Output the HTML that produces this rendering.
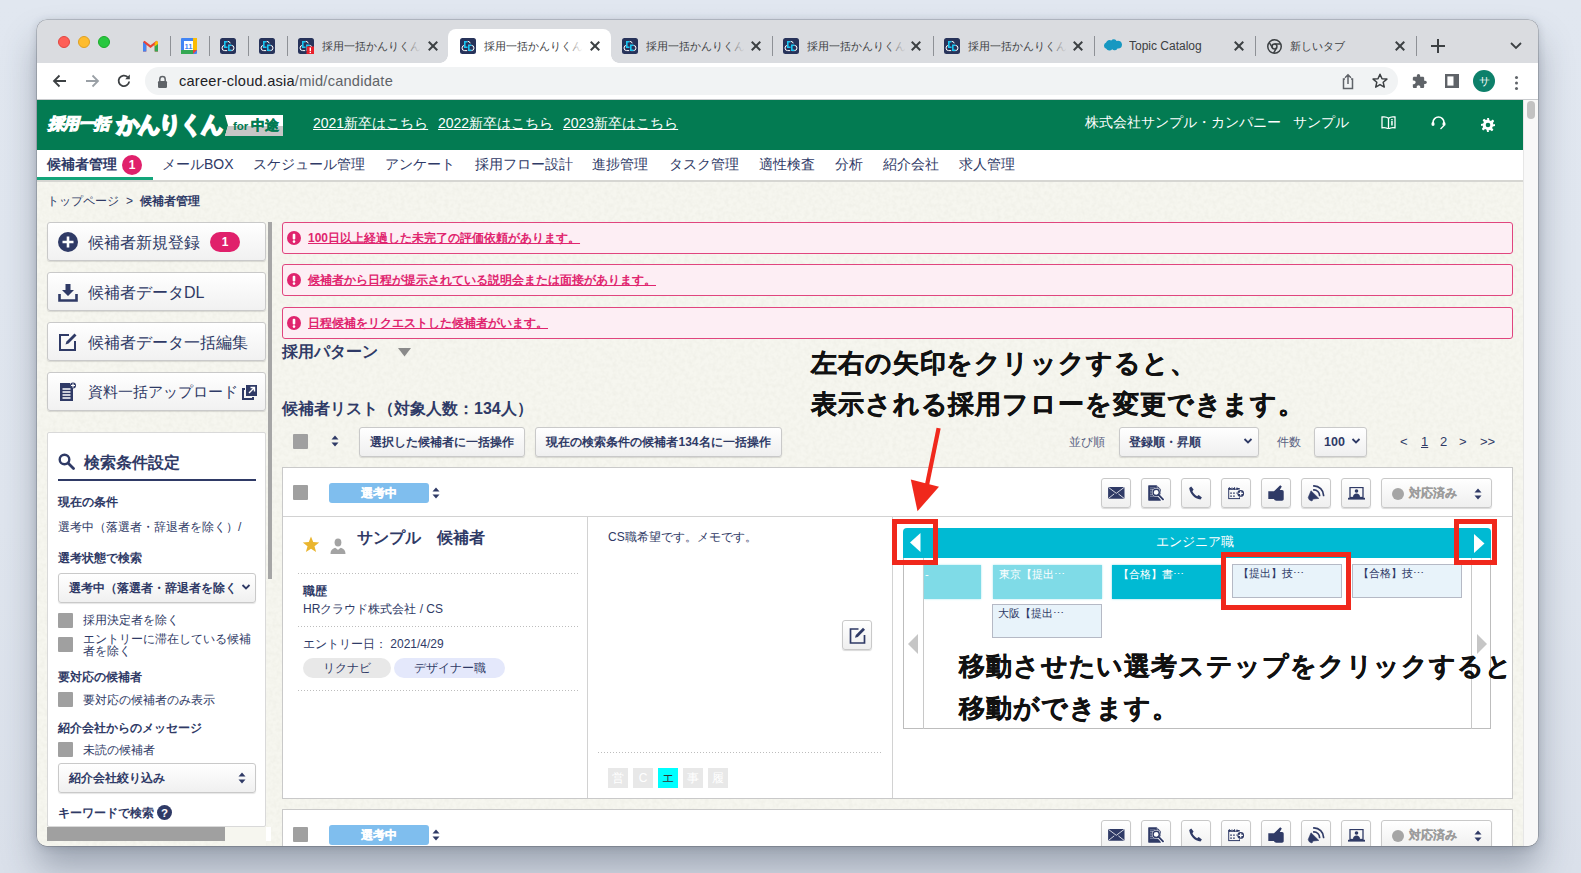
<!DOCTYPE html>
<html><head><meta charset="utf-8">
<style>
*{box-sizing:border-box;margin:0;padding:0}
html,body{width:1581px;height:873px;overflow:hidden}
body{font-family:"Liberation Sans",sans-serif;background:linear-gradient(180deg,#e1e7f0 0%,#dfe5ee 60%,#dae0ea 100%);position:relative;color:#2f3a66}
.a{position:absolute}
#win{position:absolute;left:37px;top:20px;width:1501px;height:826px;border-radius:10px;overflow:hidden;background:#dadce0;box-shadow:0 0 0 0.5px rgba(0,0,0,.3),0 1px 8px rgba(40,50,70,.2),0 22px 34px rgba(50,60,80,.36)}
.tabstrip{position:absolute;left:0;top:0;width:1501px;height:43px;background:#dadce0}
.toolbar{position:absolute;left:0;top:43px;width:1501px;height:37px;background:#fff;border-bottom:1px solid #c8cacd}
.dot{position:absolute;top:16px;width:12px;height:12px;border-radius:50%}
.sep{position:absolute;top:16px;width:1px;height:20px;background:#8e9196}
.fav{position:absolute;top:18px;width:16px;height:16px;border-radius:3px;background:#26345a}
.tt{position:absolute;top:17px;font-size:10.6px;color:#3c4043;white-space:nowrap;overflow:hidden;height:18px;line-height:18px}
.tx{position:absolute;top:19px;width:14px;height:14px}
.tx:before,.tx:after{content:"";position:absolute;left:6px;top:1px;width:2px;height:12px;background:#3c4043;transform:rotate(45deg)}
.tx:after{transform:rotate(-45deg)}
.acttab{position:absolute;left:411px;top:9px;width:163px;height:34px;background:#fff;border-radius:8px 8px 0 0}
.acttab:before,.acttab:after{content:"";position:absolute;bottom:0;width:8px;height:8px;background:radial-gradient(circle at 0 0,transparent 8px,#fff 8.5px)}
.acttab:before{left:-8px;background:radial-gradient(circle at 0 0,transparent 7.5px,#fff 8px)}
.acttab:after{right:-8px;background:radial-gradient(circle at 100% 0,transparent 7.5px,#fff 8px)}
.fade{position:absolute;top:17px;width:22px;height:18px;background:linear-gradient(90deg,rgba(218,220,224,0),#dadce0 85%)}
.fade.w{background:linear-gradient(90deg,rgba(255,255,255,0),#fff 85%)}
.urlbar{position:absolute;left:108px;top:4px;width:1253px;height:28px;border-radius:14px;background:#f1f3f4}
.url{left:142px;top:8px;font-size:14.6px;letter-spacing:0.23px;line-height:20px;color:#5f6368;white-space:nowrap}
.L{position:absolute;left:-37px;top:-20px;width:1581px;height:873px}
.logo1{left:48px;top:114px;font-size:16px;line-height:20px;font-weight:900;font-style:italic;color:#fff;letter-spacing:-0.6px;-webkit-text-stroke:1.2px #fff;white-space:nowrap}
.logo2{left:117px;top:112px;font-size:21.5px;line-height:26px;font-weight:900;color:#fff;-webkit-text-stroke:2.2px #fff;letter-spacing:-1.9px;white-space:nowrap}
.forbox{left:225px;top:115px;width:58px;height:21px;background:#fff;clip-path:polygon(0 0,100% 0,100% 100%,0 100%,3px 50%)}
.fb2{position:absolute;left:0;top:11px;width:58px;height:10px;background:#c6c6c6}
.fbt{position:absolute;left:8px;top:1px;font-size:11.5px;line-height:19px;color:#037b52;font-weight:bold;white-space:nowrap}
.fbt b{font-size:13.5px;margin-left:3px;-webkit-text-stroke:0.5px #037b52}
.hlink{top:114px;font-size:14px;line-height:18px;color:#fff;text-decoration:underline;white-space:nowrap}
.nav{top:155px;font-size:14px;line-height:18px;white-space:nowrap;color:#2f3a66}
.sbtn{left:47px;width:219px;height:39px;border:1px solid #c9c9c9;border-radius:3px;background:linear-gradient(#fff,#f1f1f1);box-shadow:0 1px 1px rgba(0,0,0,.12)}
.stx{left:88px;font-size:16px;line-height:22px;white-space:nowrap;color:#2f3a66}
.sb{left:58px;font-size:12px;line-height:16px;font-weight:bold;white-space:nowrap}
.sn{left:58px;font-size:12px;line-height:16px;white-space:nowrap}
.ssel{left:58px;width:198px;border:1px solid #c9c9c9;border-radius:3px;background:linear-gradient(#fff,#f0f0f0);box-shadow:0 1px 1px rgba(0,0,0,.1);font-size:12px;font-weight:bold;line-height:28px;white-space:nowrap;overflow:hidden}
.ssel span{margin-left:10px}
.cb{left:58px;width:15px;height:15px;background:#a0a0a0;border-radius:1px}
.alert{left:282px;width:1231px;height:32px;background:#fdeef4;border:1px solid #e0457e;border-radius:3px}
.ai{left:287px}
.at{left:308px;font-size:12px;line-height:16px;font-weight:bold;color:#e0246e;text-decoration:underline;white-space:nowrap}
.gbtn{border:1px solid #c9c9c9;border-radius:3px;background:linear-gradient(#fff,#efefef);box-shadow:0 1px 1px rgba(0,0,0,.12);font-size:12px;font-weight:bold;line-height:28px;text-align:center;white-space:nowrap;color:#2f3a66}
.pg{top:434px;font-size:13px;line-height:16px;color:#2f3a66}
.anno{font-size:26px;line-height:32px;font-weight:bold;color:#111;white-space:nowrap;letter-spacing:0.9px;-webkit-text-stroke:0.35px #111}
.card{left:282px;width:1231px;background:#fff;border:1px solid #c9c9c9}
.pill{left:329px;width:100px;height:20px;border-radius:3px;background:#7fbeee;color:#fff;font-size:12px;font-weight:bold;-webkit-text-stroke:0.3px #fff;line-height:20px;text-align:center}
.ibtn{width:30px;height:30px;border:1px solid #c9c9c9;border-radius:3px;background:linear-gradient(#fff,#efefef);box-shadow:0 1px 1px rgba(0,0,0,.15);display:flex;align-items:center;justify-content:center}
.gd{position:absolute;left:10px;top:9px;width:12px;height:12px;border-radius:50%;background:#a5a5a5}
.gdt{position:absolute;left:27px;top:6px;font-size:12px;line-height:16px;font-weight:bold;color:#9c9c9c;-webkit-text-stroke:0.2px #9c9c9c;white-space:nowrap}
.dot1{height:1px;background:repeating-linear-gradient(90deg,#bdbdbd 0 1px,transparent 1px 3px)}
.tag{top:658px;height:20px;border-radius:10px;font-size:12px;line-height:20px;text-align:center;white-space:nowrap}
.sq{top:768px;width:20px;height:20px;background:#e8e8e8;color:#fff;font-size:12px;line-height:20px;text-align:center}
.step{height:34px;font-size:11px;line-height:18px;padding-left:6px;white-space:nowrap;overflow:hidden}
.lc{background:#7fdbe7;color:#fff;box-shadow:0 0 2px #a6e6ee}
.dc{background:#00bad3;color:#fff;box-shadow:0 0 2px #7fd8e6}
.pl{background:#e8f3fa;border:1px solid #b5b9c5;color:#2f3a66;padding-left:5px;line-height:16px}
.rbox{border:5.5px solid #f0281c}
.page{position:absolute;left:0;top:80px;width:1501px;height:746px;background:#f5f4ee}
</style></head><body>
<svg width="0" height="0" style="position:absolute">
<defs>
<symbol id="cc" viewBox="0 0 16 16"><rect width="16" height="16" rx="2.5" fill="#27335a"/><path d="M4.6 7.4a2.6 2.6 0 0 0 0 5.2H7.2M11.4 7.4a2.6 2.6 0 0 1 0 5.2H9" stroke="#fff" stroke-width="1" fill="none"/><path d="M7.6 3.4a2.4 2.4 0 0 1 2.6 1.9" stroke="#fff" stroke-width="1" fill="none"/><path d="M4 3h3.5v1.5H5.6v3.9h1.9V10H4z" fill="#1ac6f2"/><path d="M8 6.4h3.5v1.5H9.6v3.6h1.9V13H8z" fill="#1ac6f2"/></symbol>
</defs></svg>
<div id="win">
  <div class="tabstrip">
    <div class="dot" style="left:21px;background:#fe5f57;border:0.5px solid #e14640"></div>
    <div class="dot" style="left:41px;background:#febc2e;border:0.5px solid #dfa023"></div>
    <div class="dot" style="left:61px;background:#28c840;border:0.5px solid #1aab29"></div>
    <svg class="a" style="left:106px;top:20px" width="15" height="12" viewBox="0 0 15 12"><path d="M0 2v9.5h3.3V4.8L7.5 8 11.7 4.8v6.7H15V2L13.4.8 7.5 5.2 1.6.8z" fill="#ea4335"/><path d="M0 2v9.5h3.3V4.8z" fill="#4285f4"/><path d="M11.7 4.8v6.7H15V2z" fill="#34a853"/><path d="M13.4.8 15 2v2L11.7 6.5V3.3z" fill="#fbbc04"/></svg>
    <div class="sep" style="left:133px"></div>
    <svg class="a" style="left:144px;top:18px" width="16" height="16" viewBox="0 0 16 16"><rect x="0" y="0" width="16" height="16" rx="1" fill="#4285f4"/><rect x="12" y="0" width="4" height="12" fill="#fbbc04"/><rect x="0" y="12" width="12" height="4" fill="#34a853"/><path d="M12 12h4l-4 4z" fill="#ea4335"/><rect x="3" y="3" width="9" height="9" fill="#fff"/><text x="7.5" y="10.6" font-size="7.5" font-weight="bold" text-anchor="middle" fill="#4285f4" font-family="Liberation Sans">11</text></svg>
    <div class="sep" style="left:172px"></div>
    <svg class="a" style="left:183px;top:18px" width="16" height="16"><use href="#cc"/></svg>
    <div class="sep" style="left:211px"></div>
    <svg class="a" style="left:222px;top:18px" width="16" height="16"><use href="#cc"/></svg>
    <div class="sep" style="left:250px"></div>
    <svg class="a" style="left:261px;top:18px" width="16" height="16"><use href="#cc"/><rect x="8.5" y="8.5" width="7.5" height="7.5" fill="#e8202a"/><rect x="11.6" y="9.5" width="1.4" height="3.6" fill="#fff"/><rect x="11.6" y="13.8" width="1.4" height="1.3" fill="#fff"/></svg>
    <div class="tt" style="left:285px;width:100px">採用一括かんりくん</div><div class="fade" style="left:365px"></div>
    <div class="tx" style="left:389px"></div>
    <div class="acttab"></div>
    <svg class="a" style="left:423px;top:18px" width="16" height="16"><use href="#cc"/></svg>
    <div class="tt" style="left:447px;width:100px">採用一括かんりくん</div><div class="fade w" style="left:527px"></div>
    <div class="tx" style="left:551px"></div>
    <svg class="a" style="left:585px;top:18px" width="16" height="16"><use href="#cc"/></svg>
    <div class="tt" style="left:609px;width:100px">採用一括かんりくん</div><div class="fade" style="left:689px"></div>
    <div class="tx" style="left:712px"></div>
    <div class="sep" style="left:735px"></div>
    <svg class="a" style="left:746px;top:18px" width="16" height="16"><use href="#cc"/></svg>
    <div class="tt" style="left:770px;width:100px">採用一括かんりくん</div><div class="fade" style="left:850px"></div>
    <div class="tx" style="left:872px"></div>
    <div class="sep" style="left:896px"></div>
    <svg class="a" style="left:907px;top:18px" width="16" height="16"><use href="#cc"/></svg>
    <div class="tt" style="left:931px;width:100px">採用一括かんりくん</div><div class="fade" style="left:1011px"></div>
    <div class="tx" style="left:1034px"></div>
    <div class="sep" style="left:1057px"></div>
    <svg class="a" style="left:1067px;top:19px" width="18" height="13" viewBox="0 0 18 13"><path d="M7.3 1.4A3.2 3.2 0 0 1 12.6 2a3.9 3.9 0 0 1 5.4 3.6 3.9 3.9 0 0 1-3.9 3.9l-.6-.1a3.2 3.2 0 0 1-5.3.9 3.6 3.6 0 0 1-5.9-.6A3.1 3.1 0 0 1 0 6.6a3.3 3.3 0 0 1 2.1-3.1A3.6 3.6 0 0 1 7.3 1.4z" fill="#1798c1"/></svg>
    <div class="tt" style="left:1092px;font-size:12px;font-family:'Liberation Sans';color:#3c4043">Topic Catalog</div>
    <div class="tx" style="left:1195px"></div>
    <div class="sep" style="left:1218px"></div>
    <svg class="a" style="left:1230px;top:19px" width="15" height="15" viewBox="0 0 16 16"><circle cx="8" cy="8" r="7.2" fill="none" stroke="#3c4043" stroke-width="1.6"/><circle cx="8" cy="8" r="2.6" fill="none" stroke="#3c4043" stroke-width="1.6"/><path d="M8 5.4h6.4M5.7 9.3 2.5 3.8M10.3 9.3 7 15" stroke="#3c4043" stroke-width="1.6"/></svg>
    <div class="tt" style="left:1253px;width:80px">新しいタブ</div>
    <div class="tx" style="left:1356px"></div>
    <div class="sep" style="left:1379px"></div>
    <div class="a" style="left:1394px;top:25px;width:14px;height:2px;background:#3c4043"></div>
    <div class="a" style="left:1400px;top:19px;width:2px;height:14px;background:#3c4043"></div>
    <svg class="a" style="left:1473px;top:21px" width="12" height="9" viewBox="0 0 12 9"><path d="M1 2l5 5 5-5" fill="none" stroke="#3c4043" stroke-width="1.8"/></svg>
  </div>
  <div class="toolbar">
    <svg class="a" style="left:14px;top:9px" width="18" height="18" viewBox="0 0 18 18"><path d="M15 9H3.5M8.5 3.5 3 9l5.5 5.5" fill="none" stroke="#3c4043" stroke-width="1.8"/></svg>
    <svg class="a" style="left:46px;top:9px" width="18" height="18" viewBox="0 0 18 18"><path d="M3 9h11.5M9.5 3.5 15 9l-5.5 5.5" fill="none" stroke="#9aa0a6" stroke-width="1.8"/></svg>
    <svg class="a" style="left:78px;top:9px" width="18" height="18" viewBox="0 0 18 18"><path d="M14.2 9.5A5.3 5.3 0 1 1 12.6 5" fill="none" stroke="#3c4043" stroke-width="1.8"/><path d="M14.8 2.6v4.6h-4.6z" fill="#3c4043"/></svg>
    <div class="urlbar"></div>
    <svg class="a" style="left:120px;top:12px" width="11" height="14" viewBox="0 0 11 14"><path d="M2.8 6V4.3a2.7 2.7 0 0 1 5.4 0V6" fill="none" stroke="#5f6368" stroke-width="1.5"/><rect x="1" y="6" width="9" height="7" rx="1.2" fill="#5f6368"/></svg>
    <div class="a url"><span style="color:#202124">career-cloud.asia</span>/mid/candidate</div>
    <svg class="a" style="left:1303px;top:10px" width="16" height="17" viewBox="0 0 16 17"><path d="M5 6H3.5v9.5h9V6H11M8 11V2M5 4.8 8 1.8l3 3" fill="none" stroke="#5f6368" stroke-width="1.5"/></svg>
    <svg class="a" style="left:1334px;top:9px" width="18" height="18" viewBox="0 0 18 18"><path d="M9 2.2l2 4.5 4.9.4-3.7 3.2 1.1 4.8L9 12.6l-4.3 2.5 1.1-4.8L2.1 7.1 7 6.7z" fill="none" stroke="#3c4043" stroke-width="1.5" stroke-linejoin="round"/></svg>
    <svg class="a" style="left:1375px;top:11px" width="15" height="14" viewBox="1.5 1 21 21"><path d="M20.5 11H19V7c0-1.1-.9-2-2-2h-4V3.5C13 2.12 11.88 1 10.5 1S8 2.12 8 3.5V5H4c-1.1 0-1.99.9-1.99 2v3.8H3.5c1.49 0 2.7 1.21 2.7 2.7s-1.21 2.7-2.7 2.7H2V20c0 1.1.9 2 2 2h3.8v-1.5c0-1.490 1.21-2.7 2.7-2.7 1.49 0 2.7 1.21 2.7 2.7V22H17c1.1 0 2-.9 2-2v-4h1.5c1.38 0 2.5-1.12 2.5-2.5S21.88 11 20.5 11z" fill="#5f6368"/></svg>
    <svg class="a" style="left:1408px;top:11px" width="14" height="14" viewBox="0 0 14 14"><rect x="1.2" y="1.2" width="11.6" height="11.6" fill="none" stroke="#5f6368" stroke-width="2.4"/><rect x="8.5" y="1" width="5" height="12" fill="#5f6368"/></svg>
    <div class="a" style="left:1436px;top:7px;width:22px;height:22px;border-radius:50%;background:#0d806a;color:#fff;font-size:11px;line-height:22px;text-align:center">サ</div>
    <div class="a" style="left:1477.5px;top:12.5px;width:3.5px;height:3.5px;border-radius:50%;background:#5f6368;box-shadow:0 5.5px 0 #5f6368,0 11px 0 #5f6368"></div>
  </div>
  <div class="L">
  <div class="a" style="left:37px;top:100px;width:1486px;height:746px;background:#f6f6ef"></div>
  <svg class="a" style="left:37px;top:180px" width="1486" height="666"><filter id="pn" x="0" y="0" width="100%" height="100%"><feTurbulence type="fractalNoise" baseFrequency="0.25" numOctaves="2" seed="3"/><feColorMatrix values="0 0 0 0 0.5  0 0 0 0 0.5  0 0 0 0 0.42  0 0 0 0.2 -0.07"/></filter><rect width="1486" height="666" filter="url(#pn)"/></svg>
  <!-- header -->
  <div class="a" style="left:37px;top:100px;width:1486px;height:50px;background:#037b52"></div>
  <div class="a" style="left:1523px;top:100px;width:15px;height:746px;background:#f8f8f8;border-left:1px solid #e6e6e6"></div>
  <div class="a" style="left:1527px;top:101px;width:8px;height:18px;border-radius:4px;background:#c2c2c2"></div>
  <div class="a logo1">採用一括</div>
  <div class="a logo2">かんりくん</div>
  <div class="a forbox"><div class="fb2"></div><div class="fbt">for<b>中途</b></div></div>
  <div class="a hlink" style="left:313px">2021新卒はこちら</div>
  <div class="a hlink" style="left:438px">2022新卒はこちら</div>
  <div class="a hlink" style="left:563px">2023新卒はこちら</div>
  <div class="a" style="left:1085px;top:114px;font-size:13.8px;line-height:18px;color:#fff;white-space:nowrap">株式会社サンプル・カンパニー</div>
  <div class="a" style="left:1293px;top:114px;font-size:13.8px;line-height:18px;color:#fff;white-space:nowrap">サンプル</div>
  <svg class="a" style="left:1381px;top:116px" width="15" height="13" viewBox="0 0 15 13"><path d="M7.5 2.2C6 1 3.5.6 1 1v10.8c2.5-.4 5 0 6.5 1.2 1.5-1.2 4-1.6 6.5-1.2V1c-2.5-.4-5 0-6.5 1.2z" fill="none" stroke="#fff" stroke-width="1.3"/><path d="M7.5 2.2V12.5" stroke="#fff" stroke-width="1.3"/><rect x="10.2" y="5" width="1.5" height="4.5" fill="#fff"/><rect x="10.2" y="3" width="1.5" height="1.3" fill="#fff"/></svg>
  <svg class="a" style="left:1431px;top:116px" width="15" height="14" viewBox="0 0 15 14"><path d="M2 8V6.5a5.5 5.5 0 0 1 11 0V8" fill="none" stroke="#fff" stroke-width="1.6"/><ellipse cx="2" cy="8" rx="1.6" ry="2" fill="#fff"/><ellipse cx="13" cy="8" rx="1.6" ry="2" fill="#fff"/><path d="M13 9.5 9.5 13" stroke="#fff" stroke-width="1.3"/></svg>
  <svg class="a" style="left:1481px;top:118px" width="14" height="14" viewBox="0 0 14 14"><path d="M6 0h2l.4 2.2 1.5.7 1.9-1.3 1.4 1.4-1.3 1.9.7 1.5L14 6v2l-2.2.4-.7 1.5 1.3 1.9-1.4 1.4-1.9-1.3-1.5.7L8 14H6l-.4-2.2-1.5-.7-1.9 1.3-1.4-1.4 1.3-1.9-.7-1.5L0 8V6l2.2-.4.7-1.5L1.6 2.2 3 .8l1.9 1.3 1.5-.7z" fill="#fff"/><circle cx="7" cy="7" r="2.3" fill="#037b52"/></svg>
  <!-- nav -->
  <div class="a" style="left:37px;top:150px;width:1486px;height:32px;background:#fff;border-bottom:2px solid #d6d6d2"></div>
  <div class="a" style="left:37px;top:177px;width:116px;height:3px;background:#13a57a"></div>
  <div class="a nav" style="left:47px;font-weight:bold">候補者管理</div>
  <div class="a" style="left:122px;top:155px;width:20px;height:20px;border-radius:50%;background:#e0206b;color:#fff;font-size:12px;font-weight:bold;text-align:center;line-height:20px">1</div>
  <div class="a nav" style="left:162px">メールBOX</div>
  <div class="a nav" style="left:253px">スケジュール管理</div>
  <div class="a nav" style="left:385px">アンケート</div>
  <div class="a nav" style="left:475px">採用フロー設計</div>
  <div class="a nav" style="left:592px">進捗管理</div>
  <div class="a nav" style="left:669px">タスク管理</div>
  <div class="a nav" style="left:759px">適性検査</div>
  <div class="a nav" style="left:835px">分析</div>
  <div class="a nav" style="left:883px">紹介会社</div>
  <div class="a nav" style="left:959px">求人管理</div>
  <!-- breadcrumb -->
  <div class="a" style="left:47px;top:193px;font-size:12.4px;line-height:16px;white-space:nowrap">トップページ</div>
  <div class="a" style="left:126px;top:193px;font-size:12px;line-height:16px">&gt;</div>
  <div class="a" style="left:140px;top:193px;font-size:12px;line-height:16px;font-weight:bold;white-space:nowrap">候補者管理</div>
  <!-- sidebar buttons -->
  <div class="a sbtn" style="top:222px"></div>
  <div class="a sbtn" style="top:272px"></div>
  <div class="a sbtn" style="top:322px"></div>
  <div class="a sbtn" style="top:372px"></div>
  <div class="a stx" style="top:231.5px">候補者新規登録</div>
  <div class="a" style="left:210px;top:232px;width:30px;height:20px;border-radius:10px;background:#e0206b;color:#fff;font-size:12px;font-weight:bold;text-align:center;line-height:20px">1</div>
  <div class="a stx" style="top:281.5px">候補者データDL</div>
  <div class="a stx" style="top:331.5px">候補者データ一括編集</div>
  <div class="a stx" style="top:381px;font-size:15px">資料一括アップロード</div>

  <svg class="a" style="left:58px;top:232px" width="20" height="20" viewBox="0 0 20 20"><circle cx="10" cy="10" r="10" fill="#2f3a66"/><path d="M10 4.5v11M4.5 10h11" stroke="#fff" stroke-width="2.6"/></svg>
  <svg class="a" style="left:58px;top:282px" width="20" height="20" viewBox="0 0 20 20"><path d="M7.5 2h5v6h3.5L10 14 4 8h3.5z" fill="#2f3a66"/><path d="M1.5 12v6.5h17V12" fill="none" stroke="#2f3a66" stroke-width="2.6"/></svg>
  <svg class="a" style="left:58px;top:332px" width="20" height="20" viewBox="0 0 20 20"><path d="M11 3H2v15h15V9" fill="none" stroke="#2f3a66" stroke-width="2"/><path d="M16.5 1.5l2 2-8 8-3 1 1-3z" fill="#2f3a66"/></svg>
  <svg class="a" style="left:59px;top:382px" width="18" height="20" viewBox="0 0 18 20"><path d="M1 1h10v3a2 2 0 0 0 3 0v15H1z" fill="#2f3a66"/><path d="M3.5 7h8M3.5 10h8M3.5 13h8M3.5 16h8" stroke="#fff" stroke-width="1.3"/><circle cx="14" cy="3.5" r="3" fill="#2f3a66"/><path d="M14 1.5v4M12 3.5h4" stroke="#fff" stroke-width="1.2"/></svg>
  <svg class="a" style="left:242px;top:384px" width="16" height="16" viewBox="0 0 16 16"><path d="M3 5H1v10h10v-2" fill="none" stroke="#2f3a66" stroke-width="2"/><rect x="4" y="1" width="11" height="11" fill="#2f3a66"/><path d="M7 9l5.5-5.5M8.5 3.5h4v4" fill="none" stroke="#fff" stroke-width="1.4"/></svg>
  <!-- search panel -->
  <div class="a" style="left:47px;top:432px;width:219px;height:395px;background:#fff;border:1px solid #d9d9d9;border-radius:2px"></div>
  <svg class="a" style="left:58px;top:453px" width="17" height="17" viewBox="0 0 17 17"><circle cx="6.5" cy="6.5" r="4.8" fill="none" stroke="#2f3a66" stroke-width="2.4"/><path d="M10 10l5.5 5.5" stroke="#2f3a66" stroke-width="2.8" stroke-linecap="round"/></svg>
  <div class="a" style="left:84px;top:451px;font-size:16px;line-height:24px;font-weight:bold;white-space:nowrap">検索条件設定</div>
  <div class="a" style="left:58px;top:479px;width:198px;height:2px;background:#2f3a66"></div>
  <div class="a sb" style="top:494px">現在の条件</div>
  <div class="a sn" style="top:519px">選考中（落選者・辞退者を除く）/</div>
  <div class="a sb" style="top:550px">選考状態で検索</div>
  <div class="a ssel" style="top:573px;height:30px"><span>選考中（落選者・辞退者を除く</span></div>
  <svg class="a" style="left:241px;top:583px" width="10" height="8" viewBox="0 0 10 8"><path d="M1.5 2l3.5 3.5L8.5 2" fill="none" stroke="#2f3a66" stroke-width="1.8"/></svg>
  <div class="a cb" style="top:613px"></div>
  <div class="a sn" style="left:83px;top:612px">採用決定者を除く</div>
  <div class="a cb" style="top:637px"></div>
  <div class="a sn" style="left:83px;top:633px;line-height:12px;width:175px;white-space:normal">エントリーに滞在している候補者を除く</div>
  <div class="a sb" style="top:669px">要対応の候補者</div>
  <div class="a cb" style="top:692px"></div>
  <div class="a sn" style="left:83px;top:692px">要対応の候補者のみ表示</div>
  <div class="a sb" style="top:720px">紹介会社からのメッセージ</div>
  <div class="a cb" style="top:742px"></div>
  <div class="a sn" style="left:83px;top:742px">未読の候補者</div>
  <div class="a ssel" style="top:763px;height:30px"><span>紹介会社絞り込み</span></div>
  <svg class="a" style="left:238px;top:772px" width="8" height="12" viewBox="0 0 8 12"><path d="M4 0.5 7.5 4.5H.5zM4 11.5.5 7.5h7z" fill="#2f3a66"/></svg>
  <div class="a sb" style="top:805px">キーワードで検索</div>
  <svg class="a" style="left:157px;top:805px" width="15" height="15" viewBox="0 0 15 15"><circle cx="7.5" cy="7.5" r="7.5" fill="#2f3a66"/><text x="7.5" y="11.8" font-size="11.5" font-weight="bold" text-anchor="middle" fill="#fff" font-family="Liberation Sans">?</text></svg>
  <div class="a" style="left:47px;top:827px;width:178px;height:14px;background:#a0a0a0"></div>
  <div class="a" style="left:225px;top:827px;width:41px;height:19px;background:#f6f6ef"></div>
  <div class="a" style="left:266px;top:827px;width:5px;height:14px;background:#fff"></div>
  <div class="a" style="left:268px;top:222px;width:4px;height:357px;background:#a6a6a6"></div>

  <!-- alerts -->
  <div class="a alert" style="top:222px"></div>
  <div class="a alert" style="top:264px"></div>
  <div class="a alert" style="top:307px"></div>
  <svg class="a ai" style="top:231px" width="14" height="14" viewBox="0 0 14 14"><circle cx="7" cy="7" r="7" fill="#e0246e"/><rect x="5.7" y="2.8" width="2.6" height="5.6" rx="1" fill="#fff"/><circle cx="7" cy="10.6" r="1.3" fill="#fff"/></svg>
  <svg class="a ai" style="top:273px" width="14" height="14" viewBox="0 0 14 14"><circle cx="7" cy="7" r="7" fill="#e0246e"/><rect x="5.7" y="2.8" width="2.6" height="5.6" rx="1" fill="#fff"/><circle cx="7" cy="10.6" r="1.3" fill="#fff"/></svg>
  <svg class="a ai" style="top:316px" width="14" height="14" viewBox="0 0 14 14"><circle cx="7" cy="7" r="7" fill="#e0246e"/><rect x="5.7" y="2.8" width="2.6" height="5.6" rx="1" fill="#fff"/><circle cx="7" cy="10.6" r="1.3" fill="#fff"/></svg>
  <div class="a at" style="top:230px">100日以上経過した未完了の評価依頼があります。</div>
  <div class="a at" style="top:272px">候補者から日程が提示されている説明会または面接があります。</div>
  <div class="a at" style="top:315px">日程候補をリクエストした候補者がいます。</div>
  <div class="a" style="left:282px;top:341px;font-size:16px;line-height:22px;font-weight:bold;white-space:nowrap">採用パターン</div>
  <svg class="a" style="left:398px;top:348px" width="13" height="9" viewBox="0 0 13 9"><path d="M0 0h13L6.5 8.5z" fill="#8a8a8a"/></svg>
  <div class="a" style="left:282px;top:398px;font-size:16px;line-height:22px;font-weight:bold;white-space:nowrap">候補者リスト（対象人数：134人）</div>
  <!-- list toolbar -->
  <div class="a cb" style="left:293px;top:434px"></div>
  <svg class="a" style="left:331px;top:435px" width="8" height="12" viewBox="0 0 8 12"><path d="M4 0.5 7.5 4.5H.5zM4 11.5.5 7.5h7z" fill="#2f3a66"/></svg>
  <div class="a gbtn" style="left:359px;top:427px;width:166px;height:30px">選択した候補者に一括操作</div>
  <div class="a gbtn" style="left:535px;top:427px;width:247px;height:30px">現在の検索条件の候補者134名に一括操作</div>
  <div class="a" style="left:1069px;top:434px;font-size:12px;line-height:16px;color:#5a6282;white-space:nowrap">並び順</div>
  <div class="a gbtn" style="left:1119px;top:427px;width:140px;height:30px;text-align:left;padding-left:9px">登録順・昇順</div>
  <svg class="a" style="left:1243px;top:437px" width="10" height="8" viewBox="0 0 10 8"><path d="M1.5 2l3.5 3.5L8.5 2" fill="none" stroke="#2f3a66" stroke-width="1.8"/></svg>
  <div class="a" style="left:1277px;top:434px;font-size:12px;line-height:16px;color:#5a6282;white-space:nowrap">件数</div>
  <div class="a gbtn" style="left:1314px;top:427px;width:53px;height:30px;text-align:left;padding-left:9px;font-size:12.5px">100</div>
  <svg class="a" style="left:1351px;top:437px" width="10" height="8" viewBox="0 0 10 8"><path d="M1.5 2l3.5 3.5L8.5 2" fill="none" stroke="#2f3a66" stroke-width="1.8"/></svg>
  <div class="a pg" style="left:1400px">&lt;</div>
  <div class="a pg" style="left:1421px;text-decoration:underline">1</div>
  <div class="a pg" style="left:1440px">2</div>
  <div class="a pg" style="left:1459px">&gt;</div>
  <div class="a pg" style="left:1480px">&gt;&gt;</div>

  <!-- card 1 -->
  <div class="a card" style="top:467px;height:332px"></div>
  <div class="a" style="left:283px;top:516px;width:1229px;height:1px;background:#d2d2d2"></div>
  <div class="a" style="left:587px;top:517px;width:1px;height:281px;background:#d2d2d2"></div>
  <div class="a" style="left:892px;top:517px;width:1px;height:281px;background:#d2d2d2"></div>
  <div class="a cb" style="left:293px;top:485px"></div>
  <div class="a pill" style="top:483px">選考中</div>
  <svg class="a" style="left:432px;top:487px" width="8" height="12" viewBox="0 0 8 12"><path d="M4 0.5 7.5 4.5H.5zM4 11.5.5 7.5h7z" fill="#2f3a66"/></svg>
  <div class="a ibtn" style="left:1101px;top:478px"><svg width="28" height="28" viewBox="1 1 28 28"><rect x="7.1" y="9" width="16.4" height="11.8" rx="1" fill="#2f3a66"/><path d="M7.6 9.5 15.3 15.3 23 9.5M7.6 20.3l5.6-4.4M23 20.3l-5.6-4.4" fill="none" stroke="#e6e8ee" stroke-width=".9"/></svg></div>
  <div class="a ibtn" style="left:1141px;top:478px"><svg width="28" height="28" viewBox="1 1 28 28"><path d="M7.8 7.2h7.9l4.1 4v11.5H7.8a.6.6 0 0 1-.6-.6V7.8a.6.6 0 0 1 .6-.6z" fill="#2f3a66"/><path d="M16.2 7.6v3.4h3.3" fill="none" stroke="#fff" stroke-width=".5"/><path d="M9 9.9h5.5M9 11.5h4.5M9 13.2h2.6M9 14.9h2.6M9 16.6h2.6M9 18.3h4.5" stroke="#9aa0b8" stroke-width=".75"/><path d="M17.3 16.6 22 21.5" stroke="#fff" stroke-width="3.6" stroke-linecap="round"/><circle cx="15.2" cy="14.4" r="4.3" fill="#fff"/><circle cx="15.2" cy="14.4" r="3.1" fill="#fff" stroke="#2f3a66" stroke-width="1.4"/><path d="M17.4 16.7 22 21.4" stroke="#2f3a66" stroke-width="1.9" stroke-linecap="round"/></svg></div>
  <div class="a ibtn" style="left:1181px;top:478px"><svg width="14" height="14" viewBox="0 0 14 14"><path d="M2.2.5 4.6 3.6 3.4 5.3c.9 2 2.6 3.9 4.7 5l1.6-1.2 3.2 2.4-1.4 2C5.6 12.6 1 8 .2 1.9z" fill="#2f3a66"/></svg></div>
  <div class="a ibtn" style="left:1221px;top:478px"><svg width="28" height="28" viewBox="1 1 28 28"><rect x="7.7" y="11.2" width="10.8" height="9.4" fill="none" stroke="#2f3a66" stroke-width="1"/><path d="M7.2 10.6h3M12 10.6h2M15.6 10.6h3" stroke="#2f3a66" stroke-width="1.4"/><path d="M8.4 9.2v2.6M11 9.4v2.4M13.5 9.2v2.6M16 9.6v2.2" stroke="#2f3a66" stroke-width="1.1"/><path d="M9.2 14.4h1.7v1.4H9.2zM12.1 14.4h1.7v1.4h-1.7zM15 14.4h1.5v1.4H15zM9.2 17.4h1.7v1.4H9.2zM12.1 17.4h1.7v1.4h-1.7z" fill="#2f3a66"/><circle cx="19.7" cy="15.4" r="4.1" fill="#fff"/><circle cx="19.7" cy="15.4" r="3.4" fill="#2f3a66"/><path d="M19.7 13.2v4.4M17.5 15.4h4.4" stroke="#fff" stroke-width="1.3"/></svg></div>
  <div class="a ibtn" style="left:1261px;top:478px"><svg width="28" height="28" viewBox="1 1 28 28"><path d="M7.3 13.2H13l6.2-6 1.6 1.3L18.8 12H21c1.1 0 1.7.7 1.7 1.8V21c0 1-.7 1.7-1.7 1.7h-5.6c-1.2 0-2-.6-2.4-1.6H7.3z" fill="#2f3a66"/></svg></div>
  <div class="a ibtn" style="left:1301px;top:478px"><svg width="28" height="28" viewBox="1 1 28 28"><path d="M10 12.8 17.8 20.4 12 21l-1 2-2.5-1-1.3-2.2.6-1.8z" fill="#2f3a66" stroke="#2f3a66" stroke-width="0.6" stroke-linejoin="round"/><path d="M12.8 11.9a5.7 5.7 0 0 1 5.8 5.6M12.8 7.9a9.7 9.7 0 0 1 9.8 9.6" fill="none" stroke="#2f3a66" stroke-width="1.7" stroke-linecap="round"/></svg></div>
  <div class="a ibtn" style="left:1341px;top:478px"><svg width="17" height="13" viewBox="0 0 17 13"><rect x="2" y="0.5" width="13" height="10" fill="none" stroke="#2f3a66" stroke-width="1.3"/><rect x="0" y="10.8" width="17" height="1.8" fill="#2f3a66"/><circle cx="8.5" cy="4" r="1.8" fill="#2f3a66"/><path d="M5 10c0-2.2 1.5-3.5 3.5-3.5S12 7.8 12 10z" fill="#2f3a66"/></svg></div>
  <div class="a ibtn" style="left:1381px;top:478px;width:111px"><span class="gd"></span><span class="gdt">対応済み</span><svg class="a" style="left:92px;top:9px" width="8" height="12" viewBox="0 0 8 12"><path d="M4 0.5 7.5 4.5H.5zM4 11.5.5 7.5h7z" fill="#2f3a66"/></svg></div>

  <svg class="a" style="left:302px;top:536px" width="18" height="17" viewBox="0 0 18 17"><path d="M9 .5l2.2 5.6 6 .3-4.7 3.8 1.6 5.8L9 12.7 3.9 16l1.6-5.8L.8 6.4l6-.3z" fill="#eab52e"/></svg>
  <svg class="a" style="left:330px;top:538px" width="16" height="16" viewBox="0 0 16 16"><ellipse cx="8" cy="4.6" rx="3.4" ry="4" fill="#a3a3a3"/><path d="M.5 16c0-3.4 1.4-5.4 4.6-6.3L8 11.6l2.9-1.9c3.2.9 4.6 2.9 4.6 6.3z" fill="#a3a3a3"/><path d="M6.2 9.2 8 11.5l1.8-2.3" fill="none" stroke="#fff" stroke-width="0.8"/></svg>
  <div class="a" style="left:357px;top:527px;font-size:16px;line-height:22px;font-weight:bold;white-space:nowrap">サンプル　候補者</div>
  <div class="a dot1" style="left:298px;top:573px;width:280px"></div>
  <div class="a" style="left:303px;top:583px;font-size:12px;line-height:16px;font-weight:bold">職歴</div>
  <div class="a" style="left:303px;top:601px;font-size:12px;line-height:16px;white-space:nowrap">HRクラウド株式会社 / CS</div>
  <div class="a dot1" style="left:298px;top:626px;width:280px"></div>
  <div class="a" style="left:303px;top:636px;font-size:12px;line-height:16px;white-space:nowrap">エントリー日： 2021/4/29</div>
  <div class="a tag" style="left:303px;width:88px;background:#e8e8e8">リクナビ</div>
  <div class="a tag" style="left:394px;width:111px;background:#e4e8fb">デザイナー職</div>
  <div class="a dot1" style="left:298px;top:690px;width:280px"></div>
  <div class="a" style="left:608px;top:529px;font-size:12px;line-height:16px;white-space:nowrap">CS職希望です。メモです。</div>
  <div class="a ibtn" style="left:842px;top:620px;width:30px;height:30px"><svg width="17" height="17" viewBox="0 0 17 17"><path d="M9.5 2H1.5v14h14V8" fill="none" stroke="#2f3a66" stroke-width="1.7"/><path d="M14 .8l2 2-7.2 7.2-2.8.8.8-2.8z" fill="#2f3a66"/></svg></div>
  <div class="a dot1" style="left:598px;top:752px;width:284px"></div>
  <div class="a sq" style="left:608px">営</div>
  <div class="a sq" style="left:633px">C</div>
  <div class="a sq" style="left:658px;background:#00ffff;color:#333">エ</div>
  <div class="a sq" style="left:683px">事</div>
  <div class="a sq" style="left:708px">履</div>
  <!-- flow -->
  <div class="a" style="left:903px;top:557px;width:588px;height:172px;border:1px solid #bdbdbd;border-top:0;background:#fff"></div>
  <div class="a" style="left:923px;top:557px;width:1px;height:172px;background:#c8c8c8"></div>
  <div class="a" style="left:1471px;top:557px;width:1px;height:172px;background:#c8c8c8"></div>
  <div class="a" style="left:903px;top:528px;width:588px;height:30px;background:#00bad3;border-radius:4px 4px 0 0"></div>
  <div class="a" style="left:1156px;top:532px;font-size:13px;line-height:20px;color:#fff;white-space:nowrap">エンジニア職</div>
  <svg class="a" style="left:910px;top:533px" width="11" height="19" viewBox="0 0 11 19"><path d="M10.5 0v19L0 9.5z" fill="#fff"/></svg>
  <svg class="a" style="left:1474px;top:534px" width="11" height="19" viewBox="0 0 11 19"><path d="M0 0v19l10.5-9.5z" fill="#fff"/></svg>
  <svg class="a" style="left:908px;top:634px" width="10" height="20" viewBox="0 0 10 20"><path d="M10 0v20L0 10z" fill="#c6c6c6"/></svg>
  <svg class="a" style="left:1477px;top:634px" width="10" height="20" viewBox="0 0 10 20"><path d="M0 0v20l10-10z" fill="#c6c6c6"/></svg>
  <div class="a step lc" style="left:924px;top:565px;width:57px;padding-left:1px">-</div>
  <div class="a step lc" style="left:993px;top:565px;width:109px">東京【提出⋯</div>
  <div class="a step dc" style="left:1112px;top:565px;width:112px">【合格】書⋯</div>
  <div class="a step pl" style="left:1232px;top:564px;width:110px">【提出】技⋯</div>
  <div class="a step pl" style="left:1352px;top:564px;width:110px">【合格】技⋯</div>
  <div class="a step pl" style="left:992px;top:604px;width:110px">大阪【提出⋯</div>
  <div class="a anno" style="left:959px;top:650px">移動させたい選考ステップをクリックすると</div>
  <div class="a anno" style="left:959px;top:692px">移動ができます。</div>
  <!-- red annotations -->
  <div class="a rbox" style="left:892px;top:519px;width:46px;height:46px"></div>
  <div class="a rbox" style="left:1454px;top:519px;width:43px;height:46px"></div>
  <div class="a rbox" style="left:1221px;top:552px;width:130px;height:58px"></div>
  <svg class="a" style="left:900px;top:420px" width="50" height="100" viewBox="0 0 50 100"><path d="M38.6 8.2 27 65" stroke="#f0281c" stroke-width="4.2"/><path d="M10.8 59.5 39 66.8 17.5 91.2z" fill="#f0281c"/></svg>
  <!-- card 2 -->
  <div class="a card" style="top:809px;height:60px"></div>
  <div class="a cb" style="left:293px;top:827px"></div>
  <div class="a pill" style="top:825px">選考中</div>
  <svg class="a" style="left:432px;top:829px" width="8" height="12" viewBox="0 0 8 12"><path d="M4 0.5 7.5 4.5H.5zM4 11.5.5 7.5h7z" fill="#2f3a66"/></svg>
  <div class="a ibtn" style="left:1101px;top:820px"><svg width="28" height="28" viewBox="1 1 28 28"><rect x="7.1" y="9" width="16.4" height="11.8" rx="1" fill="#2f3a66"/><path d="M7.6 9.5 15.3 15.3 23 9.5M7.6 20.3l5.6-4.4M23 20.3l-5.6-4.4" fill="none" stroke="#e6e8ee" stroke-width=".9"/></svg></div>
  <div class="a ibtn" style="left:1141px;top:820px"><svg width="28" height="28" viewBox="1 1 28 28"><path d="M7.8 7.2h7.9l4.1 4v11.5H7.8a.6.6 0 0 1-.6-.6V7.8a.6.6 0 0 1 .6-.6z" fill="#2f3a66"/><path d="M16.2 7.6v3.4h3.3" fill="none" stroke="#fff" stroke-width=".5"/><path d="M9 9.9h5.5M9 11.5h4.5M9 13.2h2.6M9 14.9h2.6M9 16.6h2.6M9 18.3h4.5" stroke="#9aa0b8" stroke-width=".75"/><path d="M17.3 16.6 22 21.5" stroke="#fff" stroke-width="3.6" stroke-linecap="round"/><circle cx="15.2" cy="14.4" r="4.3" fill="#fff"/><circle cx="15.2" cy="14.4" r="3.1" fill="#fff" stroke="#2f3a66" stroke-width="1.4"/><path d="M17.4 16.7 22 21.4" stroke="#2f3a66" stroke-width="1.9" stroke-linecap="round"/></svg></div>
  <div class="a ibtn" style="left:1181px;top:820px"><svg width="14" height="14" viewBox="0 0 14 14"><path d="M2.2.5 4.6 3.6 3.4 5.3c.9 2 2.6 3.9 4.7 5l1.6-1.2 3.2 2.4-1.4 2C5.6 12.6 1 8 .2 1.9z" fill="#2f3a66"/></svg></div>
  <div class="a ibtn" style="left:1221px;top:820px"><svg width="28" height="28" viewBox="1 1 28 28"><rect x="7.7" y="11.2" width="10.8" height="9.4" fill="none" stroke="#2f3a66" stroke-width="1"/><path d="M7.2 10.6h3M12 10.6h2M15.6 10.6h3" stroke="#2f3a66" stroke-width="1.4"/><path d="M8.4 9.2v2.6M11 9.4v2.4M13.5 9.2v2.6M16 9.6v2.2" stroke="#2f3a66" stroke-width="1.1"/><path d="M9.2 14.4h1.7v1.4H9.2zM12.1 14.4h1.7v1.4h-1.7zM15 14.4h1.5v1.4H15zM9.2 17.4h1.7v1.4H9.2zM12.1 17.4h1.7v1.4h-1.7z" fill="#2f3a66"/><circle cx="19.7" cy="15.4" r="4.1" fill="#fff"/><circle cx="19.7" cy="15.4" r="3.4" fill="#2f3a66"/><path d="M19.7 13.2v4.4M17.5 15.4h4.4" stroke="#fff" stroke-width="1.3"/></svg></div>
  <div class="a ibtn" style="left:1261px;top:820px"><svg width="28" height="28" viewBox="1 1 28 28"><path d="M7.3 13.2H13l6.2-6 1.6 1.3L18.8 12H21c1.1 0 1.7.7 1.7 1.8V21c0 1-.7 1.7-1.7 1.7h-5.6c-1.2 0-2-.6-2.4-1.6H7.3z" fill="#2f3a66"/></svg></div>
  <div class="a ibtn" style="left:1301px;top:820px"><svg width="28" height="28" viewBox="1 1 28 28"><path d="M10 12.8 17.8 20.4 12 21l-1 2-2.5-1-1.3-2.2.6-1.8z" fill="#2f3a66" stroke="#2f3a66" stroke-width="0.6" stroke-linejoin="round"/><path d="M12.8 11.9a5.7 5.7 0 0 1 5.8 5.6M12.8 7.9a9.7 9.7 0 0 1 9.8 9.6" fill="none" stroke="#2f3a66" stroke-width="1.7" stroke-linecap="round"/></svg></div>
  <div class="a ibtn" style="left:1341px;top:820px"><svg width="17" height="13" viewBox="0 0 17 13"><rect x="2" y="0.5" width="13" height="10" fill="none" stroke="#2f3a66" stroke-width="1.3"/><rect x="0" y="10.8" width="17" height="1.8" fill="#2f3a66"/><circle cx="8.5" cy="4" r="1.8" fill="#2f3a66"/><path d="M5 10c0-2.2 1.5-3.5 3.5-3.5S12 7.8 12 10z" fill="#2f3a66"/></svg></div>
  <div class="a ibtn" style="left:1381px;top:820px;width:111px"><span class="gd"></span><span class="gdt">対応済み</span><svg class="a" style="left:92px;top:9px" width="8" height="12" viewBox="0 0 8 12"><path d="M4 0.5 7.5 4.5H.5zM4 11.5.5 7.5h7z" fill="#2f3a66"/></svg></div>
  <!-- annotation -->
  <div class="a anno" style="left:811px;top:347px">左右の矢印をクリックすると、</div>
  <div class="a anno" style="left:811px;top:388px">表示される採用フローを変更できます。</div>
</div>
</div>
</body></html>
